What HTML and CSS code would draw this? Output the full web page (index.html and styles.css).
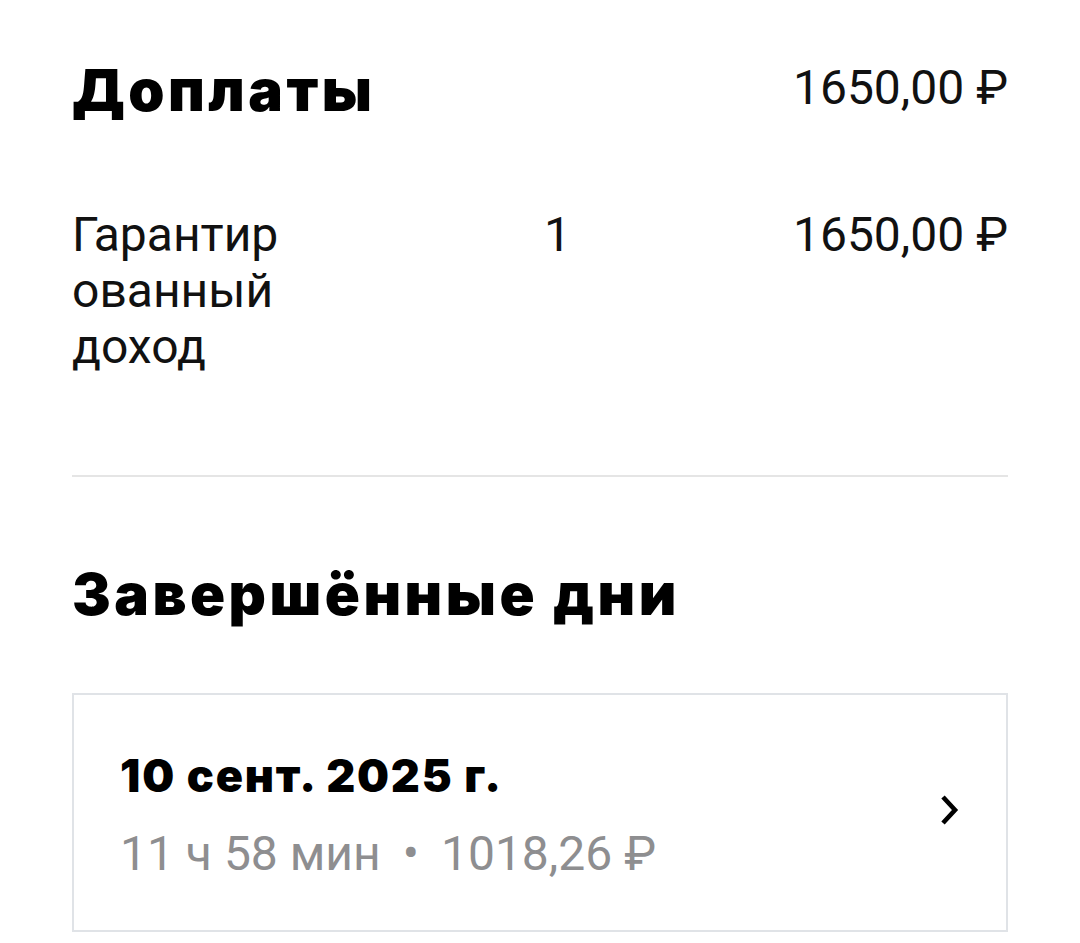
FILE: index.html
```html
<!DOCTYPE html>
<html lang="ru">
<head>
<meta charset="utf-8">
<link rel="stylesheet" href="styles.css">
</head>
<body>
<main class="page">
  <section class="section-head">
    <h2 class="heading">Доплаты</h2>
    <div class="amount head-amount">1650,00&nbsp;₽</div>
  </section>

  <div class="item-row">
    <div class="item-name">Гарантированный доход</div>
    <div class="item-qty">1</div>
    <div class="amount item-amount">1650,00&nbsp;₽</div>
  </div>

  <hr class="divider">

  <h2 class="heading heading-days">Завершённые дни</h2>

  <a class="day-card" href="#">
    <div class="day-info">
      <div class="day-date">10 сент. 2025 г.</div>
      <div class="day-meta">11 ч 58 мин<span class="dot">•</span>1018,26&nbsp;₽</div>
    </div>
    <svg class="chevron" width="22" height="34" viewBox="0 0 22 34" aria-hidden="true">
      <path d="M4 3 L16 16 L4 29" fill="none" stroke="#000" stroke-width="4.6" stroke-linejoin="miter"/>
    </svg>
  </a>
</main>
</body>
</html>
```

FILE: styles.css
```css
* { box-sizing: border-box; }

html, body {
  margin: 0;
  padding: 0;
  background: #fff;
}

body {
  font-family: Roboto, "Noto Sans", sans-serif;
  color: #111;
}

.page {
  padding: 55px 72px 0 72px;
  width: 1080px;
}

.section-head {
  display: flex;
  justify-content: space-between;
  align-items: flex-start;
}

.heading {
  margin: 0;
  font-family: Inter, "Noto Sans", sans-serif;
  font-weight: 900;
  font-size: 58px;
  line-height: 70px;
  color: #000;
  letter-spacing: 3.5px;
}

.amount {
  font-size: 48px;
  line-height: 56px;
  letter-spacing: 0;
  white-space: nowrap;
  text-align: right;
}

.head-amount {
  margin-top: 5px;
}

.item-row {
  display: grid;
  grid-template-columns: repeat(4, 1fr);
  margin-top: 82px;
  font-size: 48px;
  line-height: 56px;
}

.item-name {
  grid-column: 1;
  padding-right: 18px;
  word-break: break-all;
}

.item-qty {
  grid-column: 3;
  padding-left: 4px;
}

.item-amount {
  grid-column: 4;
}

.divider {
  margin: 100px 0 0 0;
  border: 0;
  height: 2px;
  background: #e5e5e5;
}

.heading-days {
  margin-top: 82px;
}

.day-card {
  margin-top: 64px;
  display: flex;
  align-items: center;
  justify-content: space-between;
  border: 2px solid #e0e3e7;
  padding: 54px 46px 49px 46px;
  text-decoration: none;
  color: inherit;
}

.day-date {
  font-family: Inter, "Noto Sans", sans-serif;
  font-weight: 900;
  font-size: 45px;
  line-height: 54px;
  color: #000;
  letter-spacing: 1.8px;
}

.day-meta {
  margin-top: 24px;
  font-size: 48px;
  line-height: 54px;
  color: #8e8e90;
  letter-spacing: 0;
}

.dot {
  margin: 0 22px;
}

.chevron {
  display: block;
  margin-right: -1px;
  margin-top: -8px;
}
```
